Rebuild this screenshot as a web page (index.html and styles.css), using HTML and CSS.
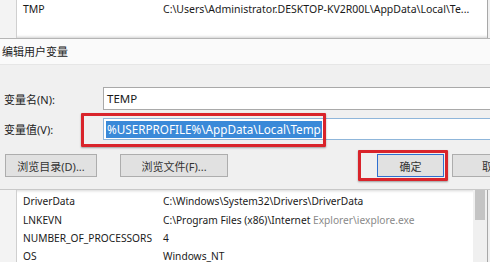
FILE: index.html
```html
<!DOCTYPE html>
<html lang="zh">
<head>
<meta charset="utf-8">
<link rel="stylesheet" href="styles.css">
</head>
<body>
<div class="screen">
  <div class="list list-top">
    <div class="strip"></div>
    <div class="rows">
      <div class="row"><span class="name">TMP</span><span class="value">C:\Users\Administrator.DESKTOP-KV2R00L\AppData\Local\Te...</span></div>
    </div>
    <div class="edge"></div>
  </div>

  <div class="dialog">
    <div class="title">编辑用户变量</div>
    <div class="body">
      <div class="field">
        <label class="label">变量名(N):</label>
        <div class="input">TEMP</div>
      </div>
      <div class="field">
        <label class="label">变量值(V):</label>
        <div class="input input-focus"><span class="sel">%USERPROFILE%\AppData\Local\Temp</span></div>
      </div>
      <div class="buttons">
        <div class="btn btn-dir">浏览目录(D)...</div>
        <div class="btn btn-file">浏览文件(F)...</div>
        <div class="spacer"></div>
        <div class="btn btn-ok">确定</div>
        <div class="btn btn-cancel">取</div>
      </div>
      <div class="mark mark-value"></div>
      <div class="mark mark-ok"></div>
    </div>
  </div>

  <div class="list list-bottom">
    <div class="strip"></div>
    <div class="rows">
      <div class="row"><span class="name">DriverData</span><span class="value">C:\Windows\System32\Drivers\DriverData</span></div>
      <div class="row"><span class="name">LNKEVN</span><span class="value">C:\Program Files (x86)\Internet <span class="faint">Explorer\iexplore.exe</span></span></div>
      <div class="row"><span class="name">NUMBER_OF_PROCESSORS</span><span class="value">4</span></div>
      <div class="row row-last"><span class="name">OS</span><span class="value">Windows_NT</span></div>
    </div>
    <div class="scroll"><div class="thumb"></div></div>
    <div class="edge"></div>
  </div>
</div>
</body>
</html>
```

FILE: styles.css
```css
* { box-sizing: border-box; }
html, body { margin: 0; padding: 0; }
body {
  width: 490px;
  height: 262px;
  overflow: hidden;
  background: #f0f0f0;
  font-family: "Noto Sans", "Noto Sans CJK SC", sans-serif;
  color: #1a1a1a;
}
.screen {
  width: 490px;
  height: 262px;
  display: flex;
  flex-direction: column;
  overflow: hidden;
}

/* background lists */
.list {
  display: flex;
  background: #fff;
}
.list .strip {
  width: 17px;
  flex: none;
  background: #f3f3f3;
  border-right: 1px solid #cfcfcf;
}
.list .rows {
  flex: 1;
  min-width: 0;
  padding-left: 6px;
  overflow: hidden;
}
.list .edge {
  width: 3px;
  flex: none;
  border-left: 1px solid #a8a8a8;
  background: #f0f0f0;
}
.row {
  display: flex;
  height: 18.5px;
  align-items: center;
  font-size: 10.2px;
  white-space: nowrap;
}
.row .name { width: 140px; flex: none; }
.row .value { flex: none; }
.row-last { height: 15px; align-items: flex-end; }
.faint { color: #8a8a8a; }

.list-top {
  flex: none;
  height: 39px;
  border-bottom: 1px solid #b5b5b5;
  box-shadow: inset 0 -3px 3px -2px #d0d0d0;
}
.list-top .rows { padding-top: 0; }
.list-top .row { font-size: 10.5px; }

.list-bottom {
  flex: 1 1 0;
  min-height: 0;
  overflow: hidden;
  border-top: 1px solid #c8c8c8;
  box-shadow: inset 0 3px 3px -2px #d8d8d8;
}
.list-bottom .rows { padding-top: 2px; }
.scroll {
  width: 14px;
  flex: none;
  background: #f0f0f0;
  padding: 0 2px 0 2px;
}
.thumb {
  height: 30px;
  background: #c4c4c4;
}

/* dialog */
.dialog {
  display: flex;
  flex-direction: column;
  flex: none;
}
.title {
  height: 26px;
  background: #fafafa;
  border-bottom: 1px solid #e6e6e6;
  font-size: 11px;
  line-height: 26px;
  padding-left: 2px;
  color: #222;
}
.body {
  position: relative;
  background: #f0f0f0;
  padding: 22px 0 12px 4px;
  display: flex;
  flex-direction: column;
}
.field {
  display: flex;
  align-items: center;
  margin-bottom: 8px;
}
.label {
  width: 99px;
  flex: none;
  font-size: 11px;
  color: #222;
}
.input {
  flex: 1;
  height: 23px;
  background: #fff;
  border: 1px solid #a9a9a9;
  border-right: none;
  font-size: 11.5px;
  line-height: 21px;
  padding-left: 3px;
  white-space: nowrap;
}
.input-focus {
  height: 22px;
  border-color: #8fb6da;
  line-height: 20px;
  padding-left: 2px;
  font-size: 11.7px;
}
.sel {
  display: inline-block;
  background: #3a89d8;
  color: #fff;
  line-height: 17px;
  padding: 0 1px;
}
.buttons {
  display: flex;
  margin-top: 6px;
  height: 23px;
}
.btn {
  height: 23px;
  background: #e1e1e1;
  border: 1px solid #adadad;
  font-size: 11px;
  color: #333;
  display: flex;
  align-items: center;
  justify-content: center;
  flex: none;
  margin-left: 1px;
}
.btn-dir { width: 92px; }
.btn-file { width: 108px; margin-left: 23px; }
.spacer { flex: 1; }
.btn-ok { width: 67px; border-color: #2f6fd0; }
.btn-cancel { width: 70px; margin-left: 8px; justify-content: flex-start; padding-left: 29px; margin-right: -32px; }

/* red annotation boxes */
.mark {
  position: absolute;
  border: 3px solid #d9242b;
  border-radius: 1px;
  box-shadow: 0 1px 2px rgba(0,0,0,0.35);
}
.mark-value { left: 81px; top: 48px; width: 245px; height: 34px; }
.mark-ok { left: 358px; top: 85px; width: 90px; height: 31px; }
```
